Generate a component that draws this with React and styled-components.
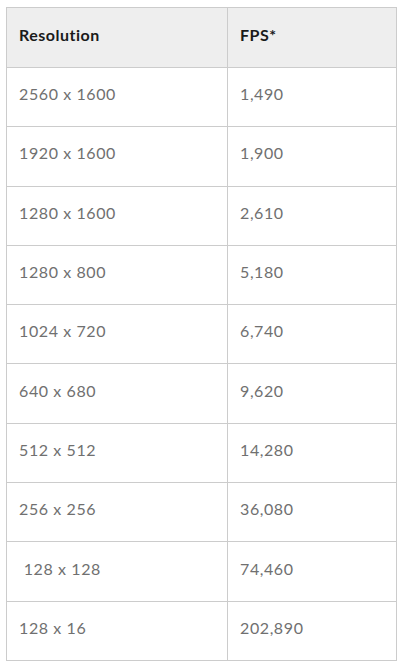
import React from "react";
import styled, { createGlobalStyle } from "styled-components";

const rows = [
  ["2560 x 1600", "1,490"],
  ["1920 x 1600", "1,900"],
  ["1280 x 1600", "2,610"],
  ["1280 x 800", "5,180"],
  ["1024 x 720", "6,740"],
  ["640 x 680", "9,620"],
  ["512 x 512", "14,280"],
  ["256 x 256", "36,080"],
  ["\u00a0128 x 128", "74,460"],
  ["128 x 16", "202,890"],
];

const GlobalStyle = createGlobalStyle`
  body {
    margin: 0;
    padding: 7px 5px 0 6px;
    background: #fff;
    font-family: Lato, "Open Sans", sans-serif;
  }
`;

const Table = styled.table`
  width: 391px;
  border-collapse: collapse;
  table-layout: fixed;
  border: 1px solid #cccccc;
`;

const HeadCell = styled.th`
  box-sizing: border-box;
  height: 60px;
  padding: 0 12px 7px;
  text-align: left;
  vertical-align: middle;
  background: #eeeeee;
  border: 1px solid #cccccc;
  font-size: 16px;
  font-weight: 700;
  color: #1a1a1a;
  letter-spacing: 0.5px;
  width: ${(p) => p.$w || "auto"};
`;

const Cell = styled.td`
  box-sizing: border-box;
  height: 59.3px;
  padding: 0 12px 7px;
  vertical-align: middle;
  border: 1px solid #cccccc;
  font-size: 16px;
  color: #707070;
  letter-spacing: 0.6px;
  white-space: pre;
`;

export default function App() {
  return (
    <>
      <GlobalStyle />
      <Table>
        <thead>
          <tr>
            <HeadCell $w="221px">Resolution</HeadCell>
            <HeadCell>FPS*</HeadCell>
          </tr>
        </thead>
        <tbody>
          {rows.map(([res, fps]) => (
            <tr key={res}>
              <Cell>{res}</Cell>
              <Cell>{fps}</Cell>
            </tr>
          ))}
        </tbody>
      </Table>
    </>
  );
}
